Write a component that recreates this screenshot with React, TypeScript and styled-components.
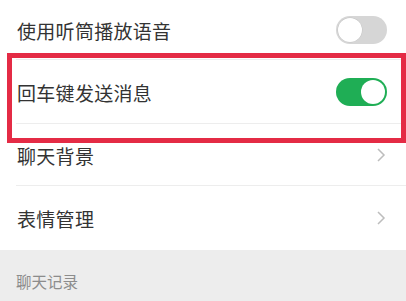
import React from 'react';
import styled, { createGlobalStyle } from 'styled-components';

const GlobalStyle = createGlobalStyle`
  html, body {
    margin: 0;
    padding: 0;
    background: #ffffff;
    font-family: "Noto Sans CJK SC", "Noto Sans", sans-serif;
    overflow: hidden;
  }
`;

const Page = styled.div`
  position: relative;
  width: 406px;
  height: 301px;
  background: #ffffff;
`;

const Row = styled.div<{ $h: number; $line?: boolean }>`
  height: ${p => p.$h}px;
  display: flex;
  align-items: center;
  justify-content: space-between;
  padding: 0 18px 0 17px;
  box-sizing: border-box;
  position: relative;
  ${p => p.$line && `
    &::after {
      content: '';
      position: absolute;
      left: 16px;
      right: 0;
      bottom: 0;
      height: 1px;
      background: #ededed;
    }
  `}
`;

const Label = styled.span`
  font-size: 19px;
  color: #333333;
  letter-spacing: 0.3px;
`;

const Track = styled.div<{ $on?: boolean }>`
  width: 51px;
  height: 28px;
  border-radius: 14px;
  background: ${p => (p.$on ? '#1fae55' : '#d6d6d6')};
  display: flex;
  align-items: center;
  justify-content: ${p => (p.$on ? 'flex-end' : 'flex-start')};
  padding: 2px;
  box-sizing: border-box;
  margin-right: 1px;
`;

const Knob = styled.div<{ $on?: boolean }>`
  width: 24px;
  height: 24px;
  border-radius: 50%;
  background: #ffffff;
  box-shadow: ${p => (p.$on ? 'none' : '0 0 0 0.5px #c4c4c4')};
`;

const Section = styled.div`
  height: 51px;
  background: #ededed;
  display: flex;
  align-items: flex-end;
  padding: 0 0 9px 16px;
  box-sizing: border-box;
`;

const SectionTitle = styled.span`
  font-size: 15.5px;
  color: #8c8c8c;
`;

const Highlight = styled.div`
  position: absolute;
  left: 7px;
  top: 53px;
  width: 399px;
  height: 90px;
  border: 5px solid #e42b45;
  box-sizing: border-box;
  pointer-events: none;
`;

const Chevron = () => (
  <svg width="10" height="16" viewBox="0 0 10 16" style={{ marginRight: 2 }}>
    <polyline points="2,2 8,8 2,14" fill="none" stroke="#bdbdbd" strokeWidth="1.5" />
  </svg>
);

const Toggle: React.FC<{ on?: boolean }> = ({ on }) => (
  <Track $on={on}>
    <Knob $on={on} />
  </Track>
);

export default function App() {
  return (
    <Page>
      <GlobalStyle />
      <Row $h={60} $line>
        <Label>使用听筒播放语音</Label>
        <Toggle />
      </Row>
      <Row $h={64} $line>
        <Label>回车键发送消息</Label>
        <Toggle on />
      </Row>
      <Row $h={62} $line>
        <Label>聊天背景</Label>
        <Chevron />
      </Row>
      <Row $h={64}>
        <Label>表情管理</Label>
        <Chevron />
      </Row>
      <Section>
        <SectionTitle>聊天记录</SectionTitle>
      </Section>
      <Highlight />
    </Page>
  );
}
